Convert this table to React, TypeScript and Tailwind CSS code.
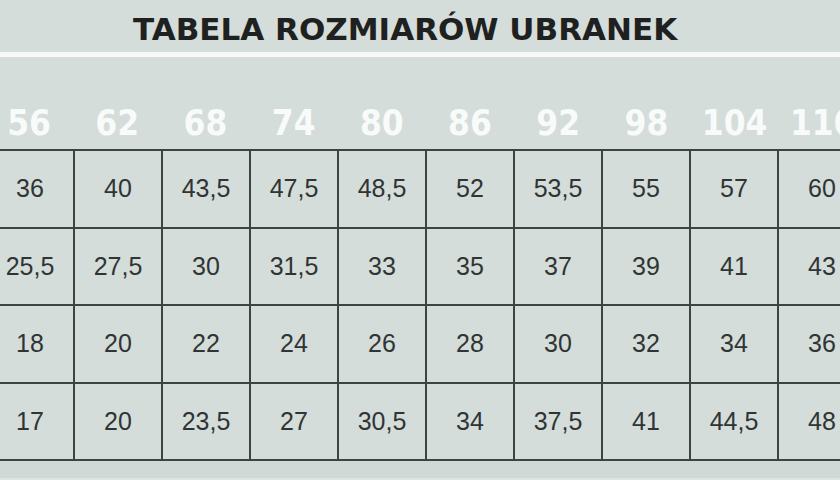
const SIZES = ["56", "62", "68", "74", "80", "86", "92", "98", "104", "110"];

const ROWS = [
  ["36", "40", "43,5", "47,5", "48,5", "52", "53,5", "55", "57", "60"],
  ["25,5", "27,5", "30", "31,5", "33", "35", "37", "39", "41", "43"],
  ["18", "20", "22", "24", "26", "28", "30", "32", "34", "36"],
  ["17", "20", "23,5", "27", "30,5", "34", "37,5", "41", "44,5", "48"],
];

export default function App() {
  return (
    <div className="h-[480px] w-[840px] overflow-hidden bg-[#d4ddd9]">
      <h1 className="pl-[133px] pt-[14px] font-['DejaVu_Sans',sans-serif] text-[31px] font-bold leading-[31px] text-[#1f2121]">
        TABELA ROZMIARÓW UBRANEK
      </h1>
      <div className="mt-[7px] h-[5px] bg-[#f6f9f8]" />

      <div className="ml-[-15px] mt-[49px] grid h-[35px] grid-cols-[repeat(10,88.2px)] font-['DejaVu_Sans_Condensed','DejaVu_Sans',sans-serif] text-[35px] font-bold leading-[35px] text-[#f8fbfa]">
        {SIZES.map((s) => (
          <div key={s} className="whitespace-nowrap text-center">
            {s}
          </div>
        ))}
      </div>

      <table className="ml-[-15px] mt-[8px] w-[882px] table-fixed border-collapse font-['Liberation_Sans',Arial,sans-serif] text-[25px] text-[#303434]">
        <tbody>
          {ROWS.map((row, i) => (
            <tr key={i} className={i % 2 === 0 ? "h-[78px]" : "h-[77px]"}>
              {row.map((v, j) => (
                <td key={j} className="border-2 border-[#3a4541] p-0 text-center align-middle">
                  {v}
                </td>
              ))}
            </tr>
          ))}
        </tbody>
      </table>
      <div className="h-[17px] bg-[#d0d9d5]" />
      <div className="h-[10px] bg-[#dde5e2]" />
    </div>
  );
}
